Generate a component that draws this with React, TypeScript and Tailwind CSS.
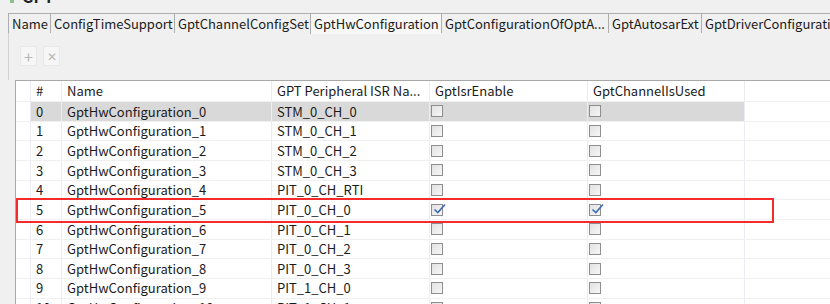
import clsx from "clsx";

type Row = { id: number; name: string; isr: string; checked?: boolean };

const rows: Row[] = [
  { id: 0, name: "GptHwConfiguration_0", isr: "STM_0_CH_0" },
  { id: 1, name: "GptHwConfiguration_1", isr: "STM_0_CH_1" },
  { id: 2, name: "GptHwConfiguration_2", isr: "STM_0_CH_2" },
  { id: 3, name: "GptHwConfiguration_3", isr: "STM_0_CH_3" },
  { id: 4, name: "GptHwConfiguration_4", isr: "PIT_0_CH_RTI" },
  { id: 5, name: "GptHwConfiguration_5", isr: "PIT_0_CH_0", checked: true },
  { id: 6, name: "GptHwConfiguration_6", isr: "PIT_0_CH_1" },
  { id: 7, name: "GptHwConfiguration_7", isr: "PIT_0_CH_2" },
  { id: 8, name: "GptHwConfiguration_8", isr: "PIT_0_CH_3" },
  { id: 9, name: "GptHwConfiguration_9", isr: "PIT_1_CH_0" },
  { id: 10, name: "GptHwConfiguration_10", isr: "PIT_1_CH_1" },
];

const tabs = [
  { label: "Name", w: "w-[42px]" },
  { label: "ConfigTimeSupport", w: "w-[124px]" },
  { label: "GptChannelConfigSet", w: "w-[136px]" },
  { label: "GptHwConfiguration", w: "w-[131px]", active: true },
  { label: "GptConfigurationOfOptA...", w: "w-[167px]" },
  { label: "GptAutosarExt", w: "w-[93px]" },
  { label: "GptDriverConfiguration", w: "w-[140px]" },
];

function Checkbox({ checked }: { checked?: boolean }) {
  return (
    <div className="relative w-[12px] h-[12px] border border-[#8e8e8e] bg-gradient-to-br from-[#e2e2e2] to-[#f6f6f6]">
      {checked && (
        <svg
          className="absolute left-[1px] -top-[3px]"
          width="13"
          height="13"
          viewBox="0 0 13 13"
        >
          <path
            d="M1.5 7.5 L4.8 10.5 L12 2.5"
            fill="none"
            stroke="#3d6cb4"
            strokeWidth="1.6"
          />
        </svg>
      )}
    </div>
  );
}

function Cell({
  children,
  className,
}: React.PropsWithChildren<{ className?: string }>) {
  return (
    <div
      className={clsx(
        "shrink-0 h-full flex items-center border-r border-[#eaeef4] overflow-hidden whitespace-nowrap",
        className
      )}
    >
      {children}
    </div>
  );
}

function HeaderRow() {
  return (
    <div className="flex h-[21px] border-b border-[#f0f0f0]">
      <Cell className="w-[15px] border-[#d4d4d4]" />
      <Cell className="w-[31px] pl-[5px] border-[#ececec]">#</Cell>
      <Cell className="w-[210px] pl-[5px] border-[#ececec]">Name</Cell>
      <Cell className="w-[158px] pl-[5px] border-[#ececec]">
        GPT Peripheral ISR Na...
      </Cell>
      <Cell className="w-[158px] pl-[5px] border-[#ececec]">GptIsrEnable</Cell>
      <Cell className="w-[157px] pl-[5px] border-[#ececec]">
        GptChannelIsUsed
      </Cell>
      <div className="flex-1" />
    </div>
  );
}

function DataRow({ row }: { row: Row }) {
  const sel = row.id === 0;
  return (
    <div className="flex h-[19.67px] border-b border-[#f0f0f0]">
      <Cell className="w-[15px] border-[#d4d4d4]" />
      <div className={clsx("flex h-full", sel && "bg-[#d9d9d9]")}>
        <Cell className="w-[31px] pl-[5px]">{row.id}</Cell>
        <Cell className="w-[210px] pl-[5px]">{row.name}</Cell>
        <Cell className="w-[158px] pl-[5px]">{row.isr}</Cell>
        <Cell className="w-[158px] pl-[1px]">
          <Checkbox checked={row.checked} />
        </Cell>
        <Cell className="w-[157px] pl-[1px]">
          <Checkbox checked={row.checked} />
        </Cell>
      </div>
      <div className="flex-1" />
    </div>
  );
}

export default function App() {
  return (
    <div className="w-[830px] h-[304px] overflow-hidden bg-[#f0f0f0] text-[13px] text-[#1b1b1b] font-['Microsoft_YaHei','Noto_Sans_CJK_SC',sans-serif]">
      {/* clipped editor title */}
      <div className="h-[13px] overflow-hidden">
        <div className="flex items-center gap-[8px] pl-[10px] -mt-[12px] h-[16px]">
          <span className="w-[4px] h-[3px] mt-[11px] bg-[#8fbf8f]" />
          <span className="font-bold text-[16px] leading-[16px] text-[#222]">
            GPT
          </span>
        </div>
      </div>

      {/* tabs */}
      <div className="flex ml-[8px] h-[20px] border-b border-[#adadad] whitespace-nowrap">
        {tabs.map((t) => (
          <div
            key={t.label}
            className={clsx(
              "shrink-0 h-[20px] border-t border-l border-[#adadad] pl-[3px] leading-[20px] overflow-hidden",
              t.w,
              t.active ? "bg-[#f7f7f7] h-[21px]" : "bg-[#f0f0f0]"
            )}
          >
            {t.label}
          </div>
        ))}
      </div>

      {/* toolbar */}
      <div className="ml-[8px] h-[47px] border-l border-[#d2d2d2] flex items-start gap-[6px] pl-[11px] pt-[13px]">
        <div className="w-[17px] h-[20px] flex items-center justify-center bg-[#f6f6f6] border border-[#e8e8e8] rounded-[2px] text-[#b8b8b8] text-[16px] leading-none">
          +
        </div>
        <div className="w-[17px] h-[20px] flex items-center justify-center bg-[#f6f6f6] border border-[#e8e8e8] rounded-[2px] text-[#b8b8b8] text-[12px] leading-none">
          ✕
        </div>
      </div>

      {/* table */}
      <div className="relative ml-[15px] border-l border-t border-[#a8a8a8] bg-white h-[230px]">
        <HeaderRow />
        {rows.map((r) => (
          <DataRow key={r.id} row={r} />
        ))}
        <div className="absolute left-0 top-[117px] w-[758px] h-[25px] border-2 border-[#f52b2b]" />
      </div>
    </div>
  );
}
